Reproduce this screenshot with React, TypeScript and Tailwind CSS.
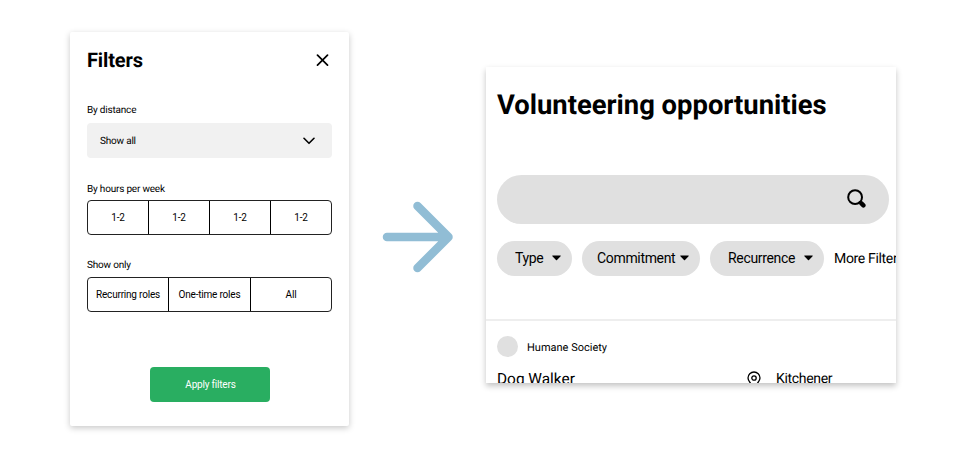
import React from 'react';

function Caret({ className }: { className: string }) {
  return (
    <svg className={`shrink-0 ${className}`} width="9" height="6" viewBox="0 0 9 6">
      <path d="M.7.5h7.6c.4 0 .6.4.3.7L5 4.9c-.3.3-.7.3-1 0L.4 1.2C.1.9.3.5.7.5z" fill="#000" />
    </svg>
  );
}

function Segments({ items, columns }: { items: string[]; columns: string }) {
  return (
    <div className={`grid h-[35px] w-[245px] divide-x divide-black rounded-[4px] border border-[#222] ${columns}`}>
      {items.map((item, i) => (
        <button key={i} className="flex items-center justify-center whitespace-nowrap text-[10px] leading-3 tracking-[-0.2px]">
          {item}
        </button>
      ))}
    </div>
  );
}

function FiltersCard() {
  return (
    <section className="mt-[32px] ml-[70px] flex h-[394px] w-[279px] shrink-0 flex-col rounded-[2px] bg-white pl-[17px] shadow-[0_2px_6px_rgba(0,0,0,0.22)]">
      <header className="mt-[16px] flex h-[24px] w-[245px] items-center justify-between">
        <h2 className="text-[20px] leading-6 font-bold tracking-[-0.12px]">Filters</h2>
        <svg className="mr-[3px]" width="13" height="13" viewBox="0 0 13 13" fill="none" stroke="#000" strokeWidth="1.7" strokeLinecap="round">
          <path d="M1.500 1.200l10 10M11.500 1.200l-10 10" />
        </svg>
      </header>
      <p className="mt-[33px] text-[10px] leading-3 tracking-[-0.2px]">By distance</p>
      <div className="mt-[6px] flex h-[35px] w-[245px] items-center justify-between rounded-[4px] bg-[#f1f1f1] pr-[17px] pl-[13px]">
        <span className="mt-[2px] text-[10px] leading-3 tracking-[-0.2px]">Show all</span>
        <svg width="12" height="8" viewBox="0 0 12 8" fill="none" stroke="#000" strokeWidth="1.6" strokeLinecap="round" strokeLinejoin="round">
          <path d="M1 1.3l5 5 5-5" />
        </svg>
      </div>
      <p className="mt-[26px] mb-[4px] text-[10px] leading-3 tracking-[-0.2px]">By hours per week</p>
      <Segments items={['1-2', '1-2', '1-2', '1-2']} columns="grid-cols-[61px_61px_61px_1fr]" />
      <p className="mt-[25px] mb-[5px] text-[10px] leading-3 tracking-[-0.2px]">Show only</p>
      <Segments items={['Recurring roles', 'One-time roles', 'All']} columns="grid-cols-[81px_82px_1fr]" />
      <button className="mt-[55px] ml-[63px] h-[35px] w-[120px] rounded-[4px] bg-[#29ae61] pl-px text-[10px] leading-3 tracking-[-0.2px] text-white">
        Apply filters
      </button>
    </section>
  );
}

function OpportunitiesCard() {
  return (
    <section className="mt-[67px] ml-[32px] h-[316px] w-[410px] shrink-0 overflow-hidden bg-white shadow-[0_3px_6px_rgba(0,0,0,0.24)]">
      <h1 className="mt-[22px] ml-[11px] text-[27.4px] leading-8 font-bold whitespace-nowrap">Volunteering opportunities</h1>
      <div className="mt-[54px] ml-[11px] flex h-[49px] w-[392px] items-center justify-end rounded-full bg-[#e0e0e0] pr-[23px]">
        <svg className="mb-[2px]" width="19" height="19" viewBox="0 0 19 19" fill="none" stroke="#000" strokeLinecap="round">
          <circle cx="8.1" cy="8.2" r="6.9" strokeWidth="2" />
          <path d="M13 13.2l1 1" strokeWidth="2.4" />
          <path d="M14.400 14.400l2 2" strokeWidth="4.400" />
        </svg>
      </div>
      <div className="mt-[17px] ml-[11px] flex h-[35px] items-center text-[14px] leading-4 tracking-[-0.33px] whitespace-nowrap">
        <button className="flex h-full w-[75px] shrink-0 items-center rounded-full bg-[#e0e0e0] pb-[2px] pl-[18px]">
          Type<Caret className="ml-auto mt-px mr-[11px]" />
        </button>
        <button className="ml-[10px] flex h-full w-[118px] shrink-0 items-center rounded-full bg-[#e0e0e0] pb-[2px] pl-[15px]">
          Commitment<Caret className="ml-auto mt-px mr-[11px]" />
        </button>
        <button className="ml-[10px] flex h-full w-[114px] shrink-0 items-center rounded-full bg-[#e0e0e0] pb-[2px] pl-[18px]">
          Recurrence<Caret className="ml-auto mt-px mr-[11px]" />
        </button>
        <span className="ml-[10px]">More Filters</span>
      </div>
      <hr className="mt-[43px] h-[2px] border-0 bg-[#eeeeee]" />
      <div className="mt-[15px] ml-[11px] flex h-[21px] items-center">
        <span className="h-[21px] w-[21px] rounded-full bg-[#e0e0e0]" />
        <span className="mt-[2px] ml-[9px] text-[11px] leading-3">Humane Society</span>
      </div>
      <div className="mt-[11px] ml-[11px] flex h-[20px] items-center whitespace-nowrap">
        <span className="mt-px w-[250px] text-[15.4px] leading-5">Dog Walker</span>
        <svg className="mt-[2px] shrink-0" width="14" height="17" viewBox="0 0 14 17" fill="none" stroke="#000" strokeWidth="1.3">
          <path d="M7 15.800C4 13 1 10.500 1 7a6 6 0 0 1 12 0c0 3.500-3 6-6 8.800z" />
          <circle cx="7" cy="7" r="2.200" />
        </svg>
        <span className="mt-px ml-[15px] text-[14px] leading-5 tracking-[-0.33px]">Kitchener</span>
      </div>
    </section>
  );
}

export default function App() {
  return (
    <main className="flex h-[458px] w-[966px] items-start overflow-hidden bg-white font-[Roboto,sans-serif] text-black [text-rendering:geometricPrecision]">
      <FiltersCard />
      <svg className="mt-[201px] ml-[33px] shrink-0" width="72" height="72" viewBox="0 0 72 72" fill="none" stroke="#91bdd5" strokeWidth="8.500" strokeLinecap="round" strokeLinejoin="round">
        <path d="M5 36h61M35.500 5L66.500 36L35.500 67" />
      </svg>
      <OpportunitiesCard />
    </main>
  );
}
